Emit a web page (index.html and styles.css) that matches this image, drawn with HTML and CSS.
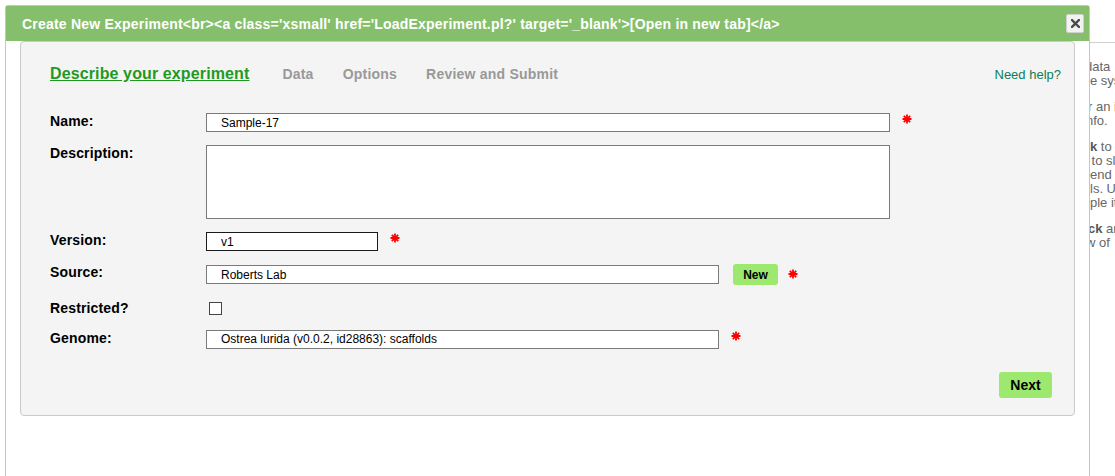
FILE: index.html
```html
<!DOCTYPE html>
<html lang="en">
<head>
<meta charset="utf-8">
<title>Create New Experiment</title>
<link rel="stylesheet" href="styles.css">
</head>
<body>
<div class="page">
  <div class="page-main"></div>
  <aside class="page-side">
    <p><span class="ln cut4">data</span><span class="ln">e sys</span></p>
    <p><span class="ln cut1">r an i</span><span class="ln cut3">nfo.</span></p>
    <p><span class="ln"><b>k</b> to <a class="side-link">s</a></span><span class="ln cut1"> to sl</span><span class="ln">end t</span><span class="ln">ls. U</span><span class="ln">ple it</span></p>
    <p><span class="ln cut1"><b>ck</b> an</span><span class="ln cut3">w of</span></p>
  </aside>
</div>

<div class="dialog">
  <div class="dialog-title">
    <span class="title-text">Create New Experiment&lt;br&gt;&lt;a class='xsmall' href='LoadExperiment.pl?' target='_blank'&gt;[Open in new tab]&lt;/a&gt;</span>
    <button class="close" type="button" aria-label="Close">
      <svg width="9" height="9" viewBox="0 0 9 9"><path d="M1 1 L8 8 M8 1 L1 8" stroke="#4a4a4a" stroke-width="2.4" stroke-linecap="square"/></svg>
    </button>
  </div>
  <div class="dialog-body">
    <div class="panel">
      <div class="tabs">
        <a class="tab tab-active">Describe your experiment</a>
        <a class="tab">Data</a>
        <a class="tab">Options</a>
        <a class="tab">Review and Submit</a>
        <a class="help">Need help?</a>
      </div>

      <div class="form">
        <div class="row">
          <label class="lbl">Name:</label>
          <div class="field">
            <input class="inp inp-wide" type="text" value="Sample-17">
            <span class="req"><svg width="10" height="10" viewBox="0 0 10 10"><path d="M5 0.5 V9.5 M0.5 5 H9.5 M1.8 1.8 L8.2 8.2 M8.2 1.8 L1.8 8.2" stroke="#f00" stroke-width="1.8"/></svg></span>
          </div>
        </div>
        <div class="row">
          <label class="lbl">Description:</label>
          <div class="field">
            <textarea class="inp area"></textarea>
          </div>
        </div>
        <div class="row">
          <label class="lbl">Version:</label>
          <div class="field">
            <input class="inp inp-short inp-focus" type="text" value="v1">
            <span class="req"><svg width="10" height="10" viewBox="0 0 10 10"><path d="M5 0.5 V9.5 M0.5 5 H9.5 M1.8 1.8 L8.2 8.2 M8.2 1.8 L1.8 8.2" stroke="#f00" stroke-width="1.8"/></svg></span>
          </div>
        </div>
        <div class="row row-source">
          <label class="lbl">Source:</label>
          <div class="field">
            <input class="inp inp-mid" type="text" value="Roberts Lab">
            <button class="btn btn-new" type="button">New</button>
            <span class="req req-btn"><svg width="10" height="10" viewBox="0 0 10 10"><path d="M5 0.5 V9.5 M0.5 5 H9.5 M1.8 1.8 L8.2 8.2 M8.2 1.8 L1.8 8.2" stroke="#f00" stroke-width="1.8"/></svg></span>
          </div>
        </div>
        <div class="row row-check">
          <label class="lbl lbl-center">Restricted?</label>
          <div class="field">
            <input class="check" type="checkbox">
          </div>
        </div>
        <div class="row">
          <label class="lbl">Genome:</label>
          <div class="field">
            <div class="inp inp-mid select">Ostrea lurida (v0.0.2, id28863): scaffolds</div>
            <span class="req"><svg width="10" height="10" viewBox="0 0 10 10"><path d="M5 0.5 V9.5 M0.5 5 H9.5 M1.8 1.8 L8.2 8.2 M8.2 1.8 L1.8 8.2" stroke="#f00" stroke-width="1.8"/></svg></span>
          </div>
        </div>
      </div>

      <div class="actions">
        <button class="btn btn-next" type="button">Next</button>
      </div>
    </div>
  </div>
</div>
</body>
</html>
```

FILE: styles.css
```css
* { box-sizing: border-box; }

html, body {
  margin: 0;
  height: 476px;
  overflow: hidden;
  background: #fff;
  font-family: "Liberation Sans", Arial, sans-serif;
}

/* Background page behind the dialog */
.page {
  display: flex;
  height: 476px;
}
.page-main {
  width: 1089px;
  flex: none;
}
.page-side {
  flex: 1;
  margin-top: 42px;
  border-top: 1px solid #d0d0d0;
  padding: 17px 0 0 1px;
  overflow: hidden;
  font-size: 13px;
  line-height: 14px;
  color: #666;
}
.page-side p {
  margin: 0 0 12px;
}
.ln {
  display: block;
  white-space: pre;
}
.cut1 { margin-left: -2px; }
.cut3 { margin-left: -4px; }
.cut4 { margin-left: -5px; }
.page-side b { color: #555; }
.side-link { color: #e0a070; }

/* Dialog overlay */
.dialog {
  position: absolute;
  left: 5px;
  top: 5px;
  width: 1085px;
  height: 500px;
  background: #fff;
  border: 1px solid #c6c6c6;
  border-radius: 3px 3px 0 0;
}
.dialog-title {
  height: 35px;
  background: #85bf6c;
  display: flex;
  align-items: center;
  justify-content: space-between;
  padding: 0 5px 0 16px;
}
.title-text {
  color: #fff;
  font-weight: bold;
  font-size: 14px;
  letter-spacing: 0.21px;
}
.close {
  width: 18px;
  height: 19px;
  padding: 0;
  margin: 0;
  border: 1px solid #d0d0d0;
  border-radius: 2px;
  background: #f2f2f2;
  display: flex;
  align-items: center;
  justify-content: center;
}

.dialog-body {
  padding: 0 14px;
}
.panel {
  height: 375px;
  background: #f4f4f4;
  border: 1px solid #cacaca;
  border-radius: 4px;
  padding: 22px 13px 0 29px;
}

/* Tabs */
.tabs {
  display: flex;
  align-items: baseline;
  height: 20px;
  line-height: 20px;
}
.tab {
  font-weight: bold;
  font-size: 14px;
  color: #999;
  margin-right: 29px;
  letter-spacing: 0.22px;
}
.tab-active {
  font-size: 16px;
  color: #1f9a1f;
  text-decoration: underline;
  margin-right: 33px;
  letter-spacing: 0.12px;
}
.help {
  margin-left: auto;
  font-size: 13px;
  color: #0b7d57;
}

/* Form */
.form {
  margin-top: 29px;
}
.row {
  display: flex;
  margin-bottom: 13px;
}
.row-source { margin-bottom: 11px; }
.row-check { height: 24px; margin-bottom: 10px; }
.lbl {
  width: 156px;
  flex: none;
  font-weight: bold;
  font-size: 14px;
  line-height: 17px;
  color: #000;
  align-self: flex-start;
  letter-spacing: 0.15px;
}
.lbl-center { align-self: center; }
.field {
  display: flex;
  align-items: center;
}
.inp {
  height: 19px;
  border: 1px solid #7a7a7a;
  background: #fff;
  padding: 0 0 0 14px;
  font-family: "Liberation Sans", Arial, sans-serif;
  font-size: 12px;
  color: #000;
  margin: 0;
  outline: none;
}
.inp-wide { width: 684px; }
.inp-short { width: 172px; }
.inp-mid { width: 513px; }
.inp-focus { border-color: #1a1a1a; }
.area {
  width: 684px;
  height: 74px;
  resize: none;
  display: block;
}
.select {
  display: flex;
  align-items: center;
  line-height: 17px;
}
.req {
  display: flex;
  margin-left: 12px;
  margin-bottom: 7px;
}
.req-btn {
  margin-left: 10px;
  margin-bottom: 2px;
}
.check {
  -webkit-appearance: none;
  appearance: none;
  width: 13px;
  height: 13px;
  margin: 0 0 0 3px;
  border: 1px solid #444;
  background: #fff;
}

/* Buttons */
.btn {
  background: #9de86e;
  border: 0;
  border-radius: 3px;
  font-family: "Liberation Sans", Arial, sans-serif;
  font-weight: bold;
  color: #000;
  padding: 0;
}
.btn-new {
  width: 45px;
  height: 21px;
  font-size: 12px;
  margin-left: 14px;
}
.actions {
  display: flex;
  justify-content: flex-end;
  margin-top: 23px;
  padding-right: 9px;
}
.btn-next {
  width: 53px;
  height: 26px;
  font-size: 14px;
}
```
